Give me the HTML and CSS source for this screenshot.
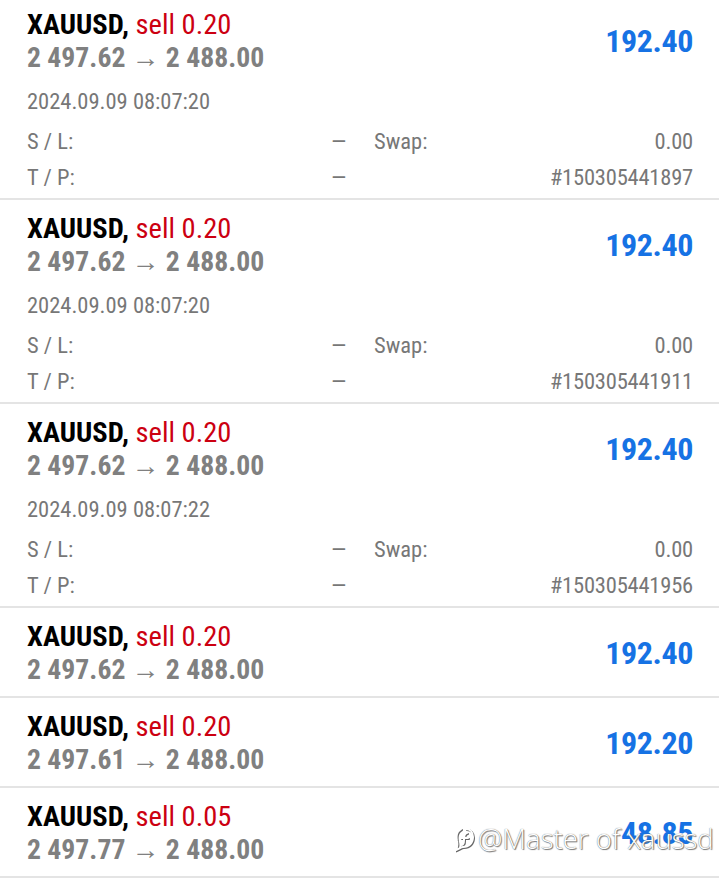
FILE: index.html
```html
<!DOCTYPE html>
<html lang="en">

<head>
  <meta charset="UTF-8">
  <meta name="viewport" content="width=device-width, initial-scale=1.0">
  <title>History</title>
  <link rel="stylesheet" href="styles.css">
</head>

<body>
  <div class="list">
    <div class="order">
      <div class="head">
        <div>
          <div class="title">XAUUSD, <span class="sell">sell 0.20</span></div>
          <div class="price">2 497.62 &rarr; 2 488.00</div>
        </div>
        <div class="profit">192.40</div>
      </div>
      <div class="date">2024.09.09 08:07:20</div>
      <div class="details">
        <div class="pair"><span>S / L:</span><span>&mdash;</span></div>
        <div class="pair"><span>Swap:</span><span>0.00</span></div>
        <div class="pair"><span>T / P:</span><span>&mdash;</span></div>
        <div class="pair"><span></span><span>#150305441897</span></div>
      </div>
    </div>

    <div class="order">
      <div class="head">
        <div>
          <div class="title">XAUUSD, <span class="sell">sell 0.20</span></div>
          <div class="price">2 497.62 &rarr; 2 488.00</div>
        </div>
        <div class="profit">192.40</div>
      </div>
      <div class="date">2024.09.09 08:07:20</div>
      <div class="details">
        <div class="pair"><span>S / L:</span><span>&mdash;</span></div>
        <div class="pair"><span>Swap:</span><span>0.00</span></div>
        <div class="pair"><span>T / P:</span><span>&mdash;</span></div>
        <div class="pair"><span></span><span>#150305441911</span></div>
      </div>
    </div>

    <div class="order">
      <div class="head">
        <div>
          <div class="title">XAUUSD, <span class="sell">sell 0.20</span></div>
          <div class="price">2 497.62 &rarr; 2 488.00</div>
        </div>
        <div class="profit">192.40</div>
      </div>
      <div class="date">2024.09.09 08:07:22</div>
      <div class="details">
        <div class="pair"><span>S / L:</span><span>&mdash;</span></div>
        <div class="pair"><span>Swap:</span><span>0.00</span></div>
        <div class="pair"><span>T / P:</span><span>&mdash;</span></div>
        <div class="pair"><span></span><span>#150305441956</span></div>
      </div>
    </div>

    <div class="order short">
      <div class="head">
        <div>
          <div class="title">XAUUSD, <span class="sell">sell 0.20</span></div>
          <div class="price">2 497.62 &rarr; 2 488.00</div>
        </div>
        <div class="profit">192.40</div>
      </div>
    </div>

    <div class="order short">
      <div class="head">
        <div>
          <div class="title">XAUUSD, <span class="sell">sell 0.20</span></div>
          <div class="price">2 497.61 &rarr; 2 488.00</div>
        </div>
        <div class="profit">192.20</div>
      </div>
    </div>

    <div class="order short">
      <div class="head">
        <div>
          <div class="title">XAUUSD, <span class="sell">sell 0.05</span></div>
          <div class="price">2 497.77 &rarr; 2 488.00</div>
        </div>
        <div class="profit">48.85</div>
      </div>
    </div>
  </div>

  <div class="watermark">
    <svg class="zhihu" width="20" height="26" viewBox="0 0 20 26">
      <path d="M6 3 C2 5 1 10 2 15 C3 19 2 22 1 24 C4 23 6 21 8 21 C14 21 18 17 18 11 C18 6 15 3 11 3"
        fill="none" stroke="#fff" stroke-width="2" stroke-linecap="round" />
      <path d="M12 7 C9 7 9 11 9 14 C9 17 8 19 6 19 M6 12 L13 12" fill="none" stroke="#fff"
        stroke-width="2" stroke-linecap="round" />
    </svg>
    <span>@Master of xaussd</span>
  </div>
</body>

</html>
```

FILE: styles.css
```css
* {
  margin: 0;
  padding: 0;
  box-sizing: border-box;
}

body {
  background: #fff;
  font-family: "Roboto Condensed", Roboto, sans-serif;
  font-stretch: condensed;
  overflow: hidden;
  position: relative;
  height: 882px;
}

.list {
  margin-top: -4px;
}

.order {
  padding: 12px 26px 3px 27px;
  border-bottom: 2px solid #e4e4e4;
}

.order.short {
  padding-bottom: 10px;
}

.head {
  display: flex;
  justify-content: space-between;
  align-items: center;
}

.title {
  font-size: 28.5px;
  line-height: 33px;
  font-weight: bold;
  color: #000;
}

.sell {
  font-weight: normal;
  color: #cc0011;
}

.price {
  font-size: 27.7px;
  line-height: 33px;
  font-weight: bold;
  color: #808080;
}

.profit {
  font-size: 32px;
  letter-spacing: -0.4px;
  font-weight: bold;
  color: #1672e4;
}

.date {
  margin-top: 9px;
  margin-bottom: 4px;
  font-size: 22.5px;
  line-height: 36px;
  color: #777;
}

.details {
  display: grid;
  grid-template-columns: 1fr 1fr;
  column-gap: 28px;
  font-size: 22.5px;
  line-height: 36px;
  color: #777;
}

.pair {
  display: flex;
  justify-content: space-between;
}

.pair span:last-child {
  letter-spacing: -0.2px;
}

.watermark {
  position: absolute;
  left: 455px;
  top: 820px;
  display: flex;
  align-items: center;
  gap: 3px;
  font-family: "Open Sans", sans-serif;
  font-stretch: normal;
  font-weight: 300;
  font-size: 27.5px;
  color: #fff;
  text-shadow: 0 0 1px #555, 1px 1px 1px #777;
}

.zhihu {
  filter: drop-shadow(1px 1px 0.5px #666);
}
```
